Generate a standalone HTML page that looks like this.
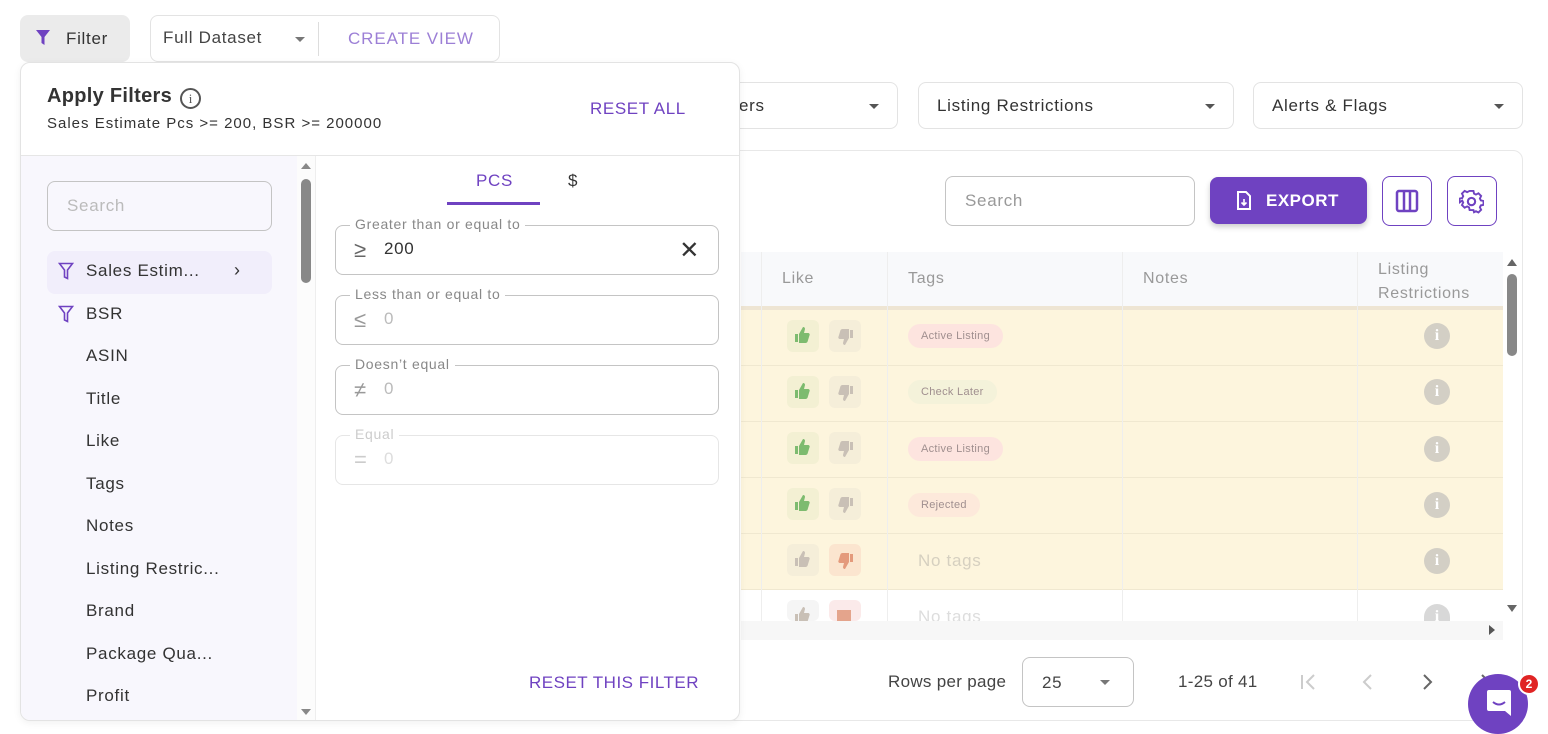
<!DOCTYPE html>
<html><head><meta charset="utf-8"><style>
*{box-sizing:border-box;margin:0;padding:0}
body{width:1548px;height:732px;overflow:hidden;background:#fff;font-family:"Liberation Sans",sans-serif;color:#333;position:relative;letter-spacing:.7px}
.abs{position:absolute}
.sel{position:absolute;border:1px solid #e3e3e3;border-radius:8px;background:#fff;font-size:17px;color:#333;padding-left:18px;display:flex;align-items:center}
.caret{position:absolute;right:18px;top:50%;margin-top:-2px;width:0;height:0;border-left:5px solid transparent;border-right:5px solid transparent;border-top:5px solid #555}
.row{position:absolute;left:741px;width:762px;height:56px;background:#fdf5dd;border-bottom:1px solid #f0e8d0}
.th{position:absolute;background:#f8f9fb}
.tb{position:absolute;width:32px;height:32px;border-radius:6px}
.tag{position:absolute;left:908px;height:24px;border-radius:12px;font-size:11px;color:#a08f8f;padding:0 13px;line-height:24px;letter-spacing:.3px}
.info{position:absolute;left:1424px;width:26px;height:26px;border-radius:50%;background:#d3cfc5;color:#fff;font-weight:bold;font-size:16px;text-align:center;line-height:26px;font-family:"Liberation Serif",serif;letter-spacing:0}
.item{position:absolute;left:86px;font-size:17px;color:#333}
.fld{position:absolute;left:335px;width:384px;height:50px;border:1px solid #c4c4c4;border-radius:8px}
.lbl{position:absolute;left:14px;top:-10px;background:#fff;padding:0 5px;font-size:14px;color:#888}
.sym{position:absolute;left:18px;top:11px;font-size:22px;color:#999;letter-spacing:0}
.val{position:absolute;left:48px;top:13px;font-size:17px;color:#bbb}
</style></head><body>

<div class="abs" style="left:20px;top:15px;width:110px;height:47px;background:#ebebeb;border-radius:8px"></div>
<svg class="abs" style="left:35px;top:29px" width="16" height="18" viewBox="0 0 16 18"><path d="M1 1H15L9.5 8V16L6.5 14V8Z" fill="#6f42c1"/></svg>
<div class="abs" style="left:66px;top:29px;font-size:17px;color:#333">Filter</div>
<div class="abs" style="left:150px;top:15px;width:350px;height:47px;border:1px solid #e3e3e3;border-radius:8px"></div>
<div class="abs" style="left:163px;top:28px;font-size:17px;color:#444">Full Dataset</div>
<div class="abs" style="left:295px;top:37px;border-left:5px solid transparent;border-right:5px solid transparent;border-top:5px solid #777"></div>
<div class="abs" style="left:318px;top:22px;width:1px;height:34px;background:#ddd"></div>
<div class="abs" style="left:348px;top:29px;font-size:17px;color:#9c7fd6;letter-spacing:.9px">CREATE VIEW</div>

<div class="sel" style="left:720px;top:82px;width:178px;height:47px">ers<span class="caret"></span></div>
<div class="sel" style="left:918px;top:82px;width:316px;height:47px">Listing Restrictions<span class="caret"></span></div>
<div class="sel" style="left:1253px;top:82px;width:270px;height:47px">Alerts &amp; Flags<span class="caret"></span></div>

<div class="abs" style="left:720px;top:150px;width:803px;height:571px;border:1px solid #e8e8e8;border-radius:10px"></div>
<div class="abs" style="left:945px;top:176px;width:250px;height:50px;border:1px solid #c4c4c4;border-radius:8px;font-size:17px;color:#999;padding:14px 0 0 19px">Search</div>
<div class="abs" style="left:1210px;top:177px;width:157px;height:47px;background:#6f42c1;border-radius:8px;box-shadow:0 3px 6px rgba(0,0,0,.2);color:#fff;font-weight:bold;font-size:17px;padding:14px 0 0 56px;letter-spacing:.5px">EXPORT</div>
<svg class="abs" style="left:1236px;top:191px" width="16" height="19" viewBox="0 0 16 19"><path d="M2 1H10L14 5V18H2Z" fill="none" stroke="#fff" stroke-width="2"/><path d="M8 8V14M5.5 11.5L8 14L10.5 11.5" stroke="#fff" stroke-width="1.6" fill="none"/></svg>
<div class="abs" style="left:1382px;top:176px;width:50px;height:50px;border:1px solid #6f42c1;border-radius:8px"></div>
<svg class="abs" style="left:1395px;top:189px" width="24" height="24" viewBox="0 0 24 24"><rect x="2" y="2" width="20" height="20" rx="2" fill="none" stroke="#6f42c1" stroke-width="2.5"/><path d="M9 2V22M15 2V22" stroke="#6f42c1" stroke-width="2.5"/></svg>
<div class="abs" style="left:1447px;top:176px;width:50px;height:50px;border:1px solid #6f42c1;border-radius:8px"></div>
<svg class="abs" style="left:1459px;top:189px" width="25" height="25" viewBox="0 0 24 24"><path d="M10 2h4l.6 2.8 2 1 2.6-1.3 2.8 2.8-1.3 2.6 1 2 2.8.6v4l-2.8.6-1 2 1.3 2.6-2.8 2.8-2.6-1.3-2 1L14 22h-4l-.6-2.8-2-1-2.6 1.3-2.8-2.8 1.3-2.6-1-2L-.5 14v-4l2.8-.6 1-2L2 4.8 4.8 2l2.6 1.3 2-1z" transform="translate(1 0) scale(.92)" fill="none" stroke="#6f42c1" stroke-width="2"/><circle cx="12" cy="12" r="3.5" fill="none" stroke="#6f42c1" stroke-width="2"/></svg>

<div class="th" style="left:741px;top:252px;width:762px;height:58px;border-bottom:4px solid #eee5d3"></div>
<div class="abs" style="left:782px;top:270px;font-size:16px;color:#999">Like</div>
<div class="abs" style="left:908px;top:270px;font-size:16px;color:#999">Tags</div>
<div class="abs" style="left:1143px;top:270px;font-size:16px;color:#999">Notes</div>
<div class="abs" style="left:1378px;top:258px;font-size:16px;color:#999;line-height:24px">Listing<br>Restrictions</div>

<div class="row" style="top:310px"></div>
<div class="row" style="top:366px"></div>
<div class="row" style="top:422px"></div>
<div class="row" style="top:478px"></div>
<div class="row" style="top:534px"></div>
<div class="row" style="top:590px;background:#fff;height:31px;border:none"></div>
<div class="abs" style="left:761px;top:252px;width:1px;height:369px;background:#eee"></div>
<div class="abs" style="left:887px;top:252px;width:1px;height:369px;background:#eee"></div>
<div class="abs" style="left:1122px;top:252px;width:1px;height:369px;background:#eee"></div>
<div class="abs" style="left:1357px;top:252px;width:1px;height:369px;background:#eee"></div>

<div class="tb" style="left:787px;top:320px;background:#f3f0d3"></div><div class="tb" style="left:829px;top:320px;background:#f5eed9"></div>
<div class="tb" style="left:787px;top:376px;background:#f3f0d3"></div><div class="tb" style="left:829px;top:376px;background:#f5eed9"></div>
<div class="tb" style="left:787px;top:432px;background:#f3f0d3"></div><div class="tb" style="left:829px;top:432px;background:#f5eed9"></div>
<div class="tb" style="left:787px;top:488px;background:#f3f0d3"></div><div class="tb" style="left:829px;top:488px;background:#f5eed9"></div>
<div class="tb" style="left:787px;top:544px;background:#f5eed9"></div><div class="tb" style="left:829px;top:544px;background:#fbe5cf"></div>
<div class="tb" style="left:787px;top:600px;height:21px;background:#f5f5f5"></div><div class="tb" style="left:829px;top:600px;height:21px;background:#fbeaea"></div>
<svg class="abs" style="left:0;top:0" width="1548" height="732">
<defs><path id="up" d="M0 7h3v8H0zM4 7l4-7c1.5 0 2 1 2 2l-1 4h4c1 0 2 1 1.6 2l-2 6.5c-.3.8-1 1.5-2 1.5H4z"/></defs>
<g fill="#7dbb6f"><use href="#up" x="795" y="327"/><use href="#up" x="795" y="383"/><use href="#up" x="795" y="439"/><use href="#up" x="795" y="495"/></g>
<g fill="#c9c0b6"><use href="#up" x="795" y="551"/><use href="#up" x="795" y="607"/></g>
<g fill="#c9c0b6"><use href="#up" transform="translate(853 345) scale(-1 -1)"/><use href="#up" transform="translate(853 401) scale(-1 -1)"/><use href="#up" transform="translate(853 457) scale(-1 -1)"/><use href="#up" transform="translate(853 513) scale(-1 -1)"/></g>
<g fill="#e49a7c"><use href="#up" transform="translate(853 569) scale(-1 -1)"/></g>
<rect x="837" y="610" width="14" height="11" fill="#e4a48c"/>
</svg>
<div class="abs" style="left:741px;top:621px;width:762px;height:19px;background:#f7f7f7"></div>

<div class="tag" style="top:324px;background:#fde4df">Active Listing</div>
<div class="tag" style="top:380px;background:#f4f2da">Check Later</div>
<div class="tag" style="top:437px;background:#fde4df">Active Listing</div>
<div class="tag" style="top:493px;background:#fde9db">Rejected</div>
<div class="abs" style="left:918px;top:551px;font-size:17px;color:#d6d0c0">No tags</div>
<div class="abs" style="left:918px;top:607px;font-size:17px;color:#ddd;height:14px;overflow:hidden">No tags</div>

<div class="info" style="top:323px">i</div><div class="info" style="top:379px">i</div><div class="info" style="top:436px">i</div><div class="info" style="top:492px">i</div><div class="info" style="top:548px">i</div>
<div class="info" style="top:604px;height:17px;background:#d8d8d8;border-radius:13px 13px 0 0">i</div>

<div class="abs" style="left:1503px;top:252px;width:17px;height:369px;background:#fff"></div>
<div class="abs" style="left:1507px;top:259px;border-left:5px solid transparent;border-right:5px solid transparent;border-bottom:7px solid #666"></div>
<div class="abs" style="left:1507px;top:274px;width:10px;height:82px;background:#888;border-radius:5px"></div>
<div class="abs" style="left:1507px;top:605px;border-left:5px solid transparent;border-right:5px solid transparent;border-top:7px solid #666"></div>
<div class="abs" style="left:1489px;top:625px;border-top:5px solid transparent;border-bottom:5px solid transparent;border-left:6px solid #555"></div>

<div class="abs" style="left:888px;top:672px;font-size:17px;color:#444;letter-spacing:.3px">Rows per page</div>
<div class="abs" style="left:1022px;top:657px;width:112px;height:50px;border:1px solid #c4c4c4;border-radius:8px;font-size:17px;color:#444;padding:15px 0 0 19px">25</div>
<div class="abs" style="left:1100px;top:680px;border-left:5px solid transparent;border-right:5px solid transparent;border-top:5px solid #777"></div>
<div class="abs" style="left:1178px;top:672px;font-size:17px;color:#444;letter-spacing:.3px">1-25 of 41</div>
<svg class="abs" style="left:1296px;top:670px" width="200" height="24" viewBox="0 0 200 24"><path d="M6 5V19M18 5L11 12L18 19" stroke="#ccc" stroke-width="2" fill="none"/><path d="M75 5L68 12L75 19" stroke="#ccc" stroke-width="2" fill="none"/><path d="M128 5L135 12L128 19" stroke="#666" stroke-width="2" fill="none"/><path d="M186 5L190 9" stroke="#666" stroke-width="2"/></svg>
<div class="abs" style="left:1468px;top:674px;width:60px;height:60px;border-radius:50%;background:#6f42c1"></div>
<svg class="abs" style="left:1485px;top:688px" width="28" height="30" viewBox="0 0 28 30"><path d="M4 2H24a2 2 0 0 1 2 2V28L20 23H4a2 2 0 0 1-2-2V4a2 2 0 0 1 2-2Z" fill="#fff"/><path d="M8 14Q14 19 20 14" stroke="#6f42c1" stroke-width="2" fill="none"/></svg>
<div class="abs" style="left:1518px;top:673px;width:22px;height:22px;border-radius:50%;background:#e02424;border:2px solid #fff;color:#fff;font-size:12px;font-weight:bold;text-align:center;line-height:18px;letter-spacing:0">2</div>

<div class="abs" style="left:20px;top:62px;width:720px;height:659px;background:#fff;border:1px solid #e3e3e3;border-radius:10px;box-shadow:0 2px 8px rgba(0,0,0,.06);overflow:hidden">
  <div class="abs" style="left:26px;top:22px;font-size:20px;font-weight:bold;color:#333;letter-spacing:.3px">Apply Filters</div>
  <div class="abs" style="left:159px;top:25px;width:21px;height:21px;border:2px solid #555;border-radius:50%;font-size:13px;text-align:center;line-height:17px;color:#555;font-family:'Liberation Serif',serif;letter-spacing:0">i</div>
  <div class="abs" style="left:26px;top:52px;font-size:15px;color:#333;letter-spacing:1px">Sales Estimate Pcs &gt;= 200, BSR &gt;= 200000</div>
  <div class="abs" style="left:569px;top:36px;font-size:17px;color:#6f42c1;letter-spacing:.6px">RESET ALL</div>
  <div class="abs" style="left:0;top:92px;width:720px;height:1px;background:#e6e6e6"></div>
  <div class="abs" style="left:0;top:93px;width:276px;height:566px;background:#f8f7fd"></div>
  <div class="abs" style="left:276px;top:93px;width:18px;height:566px;background:#fcfcfc"></div>
  <div class="abs" style="left:280px;top:100px;border-left:5px solid transparent;border-right:5px solid transparent;border-bottom:6px solid #888"></div>
  <div class="abs" style="left:280px;top:116px;width:10px;height:104px;background:#888;border-radius:5px"></div>
  <div class="abs" style="left:280px;top:646px;border-left:5px solid transparent;border-right:5px solid transparent;border-top:6px solid #888"></div>
  <div class="abs" style="left:294px;top:93px;width:1px;height:566px;background:#eee"></div>
  <div class="abs" style="left:26px;top:118px;width:225px;height:50px;border:1px solid #c4c4c4;border-radius:8px;font-size:17px;color:#bbb;padding:14px 0 0 19px">Search</div>
  <div class="abs" style="left:26px;top:188px;width:225px;height:43px;background:#f1eefb;border-radius:8px"></div>
</div>
<svg class="abs" style="left:58px;top:262px" width="16" height="18" viewBox="0 0 16 18"><path d="M1.5 1.5H14.5L9.5 8V16.5L6.5 15V8Z" fill="none" stroke="#6f42c1" stroke-width="1.6"/></svg>
<div class="item" style="top:261px">Sales Estim...</div>
<div class="abs" style="left:234px;top:260px;font-size:18px;color:#333">›</div>
<svg class="abs" style="left:58px;top:305px" width="16" height="18" viewBox="0 0 16 18"><path d="M1.5 1.5H14.5L9.5 8V16.5L6.5 15V8Z" fill="none" stroke="#6f42c1" stroke-width="1.6"/></svg>
<div class="item" style="top:304px">BSR</div>
<div class="item" style="top:346px">ASIN</div>
<div class="item" style="top:389px">Title</div>
<div class="item" style="top:431px">Like</div>
<div class="item" style="top:474px">Tags</div>
<div class="item" style="top:516px">Notes</div>
<div class="item" style="top:559px">Listing Restric...</div>
<div class="item" style="top:601px">Brand</div>
<div class="item" style="top:644px">Package Qua...</div>
<div class="item" style="top:686px">Profit</div>

<div class="abs" style="left:476px;top:171px;font-size:17px;color:#6f42c1">PCS</div>
<div class="abs" style="left:447px;top:202px;width:93px;height:3px;background:#6f42c1"></div>
<div class="abs" style="left:568px;top:171px;font-size:17px;color:#333">$</div>

<div class="fld" style="top:225px"><span class="lbl">Greater than or equal to</span><span class="sym" style="color:#666">≥</span><span class="val" style="color:#333">200</span><span class="abs" style="right:18px;top:10px;font-size:24px;color:#333">✕</span></div>
<div class="fld" style="top:295px"><span class="lbl">Less than or equal to</span><span class="sym">≤</span><span class="val">0</span></div>
<div class="fld" style="top:365px"><span class="lbl">Doesn’t equal</span><span class="sym">≠</span><span class="val">0</span></div>
<div class="fld" style="top:435px;border-color:#e6e6e6"><span class="lbl" style="color:#ccc">Equal</span><span class="sym" style="color:#ccc">=</span><span class="val" style="color:#ddd">0</span></div>
<div class="abs" style="left:529px;top:673px;font-size:17px;color:#6f42c1;letter-spacing:.5px">RESET THIS FILTER</div>
</body></html>
